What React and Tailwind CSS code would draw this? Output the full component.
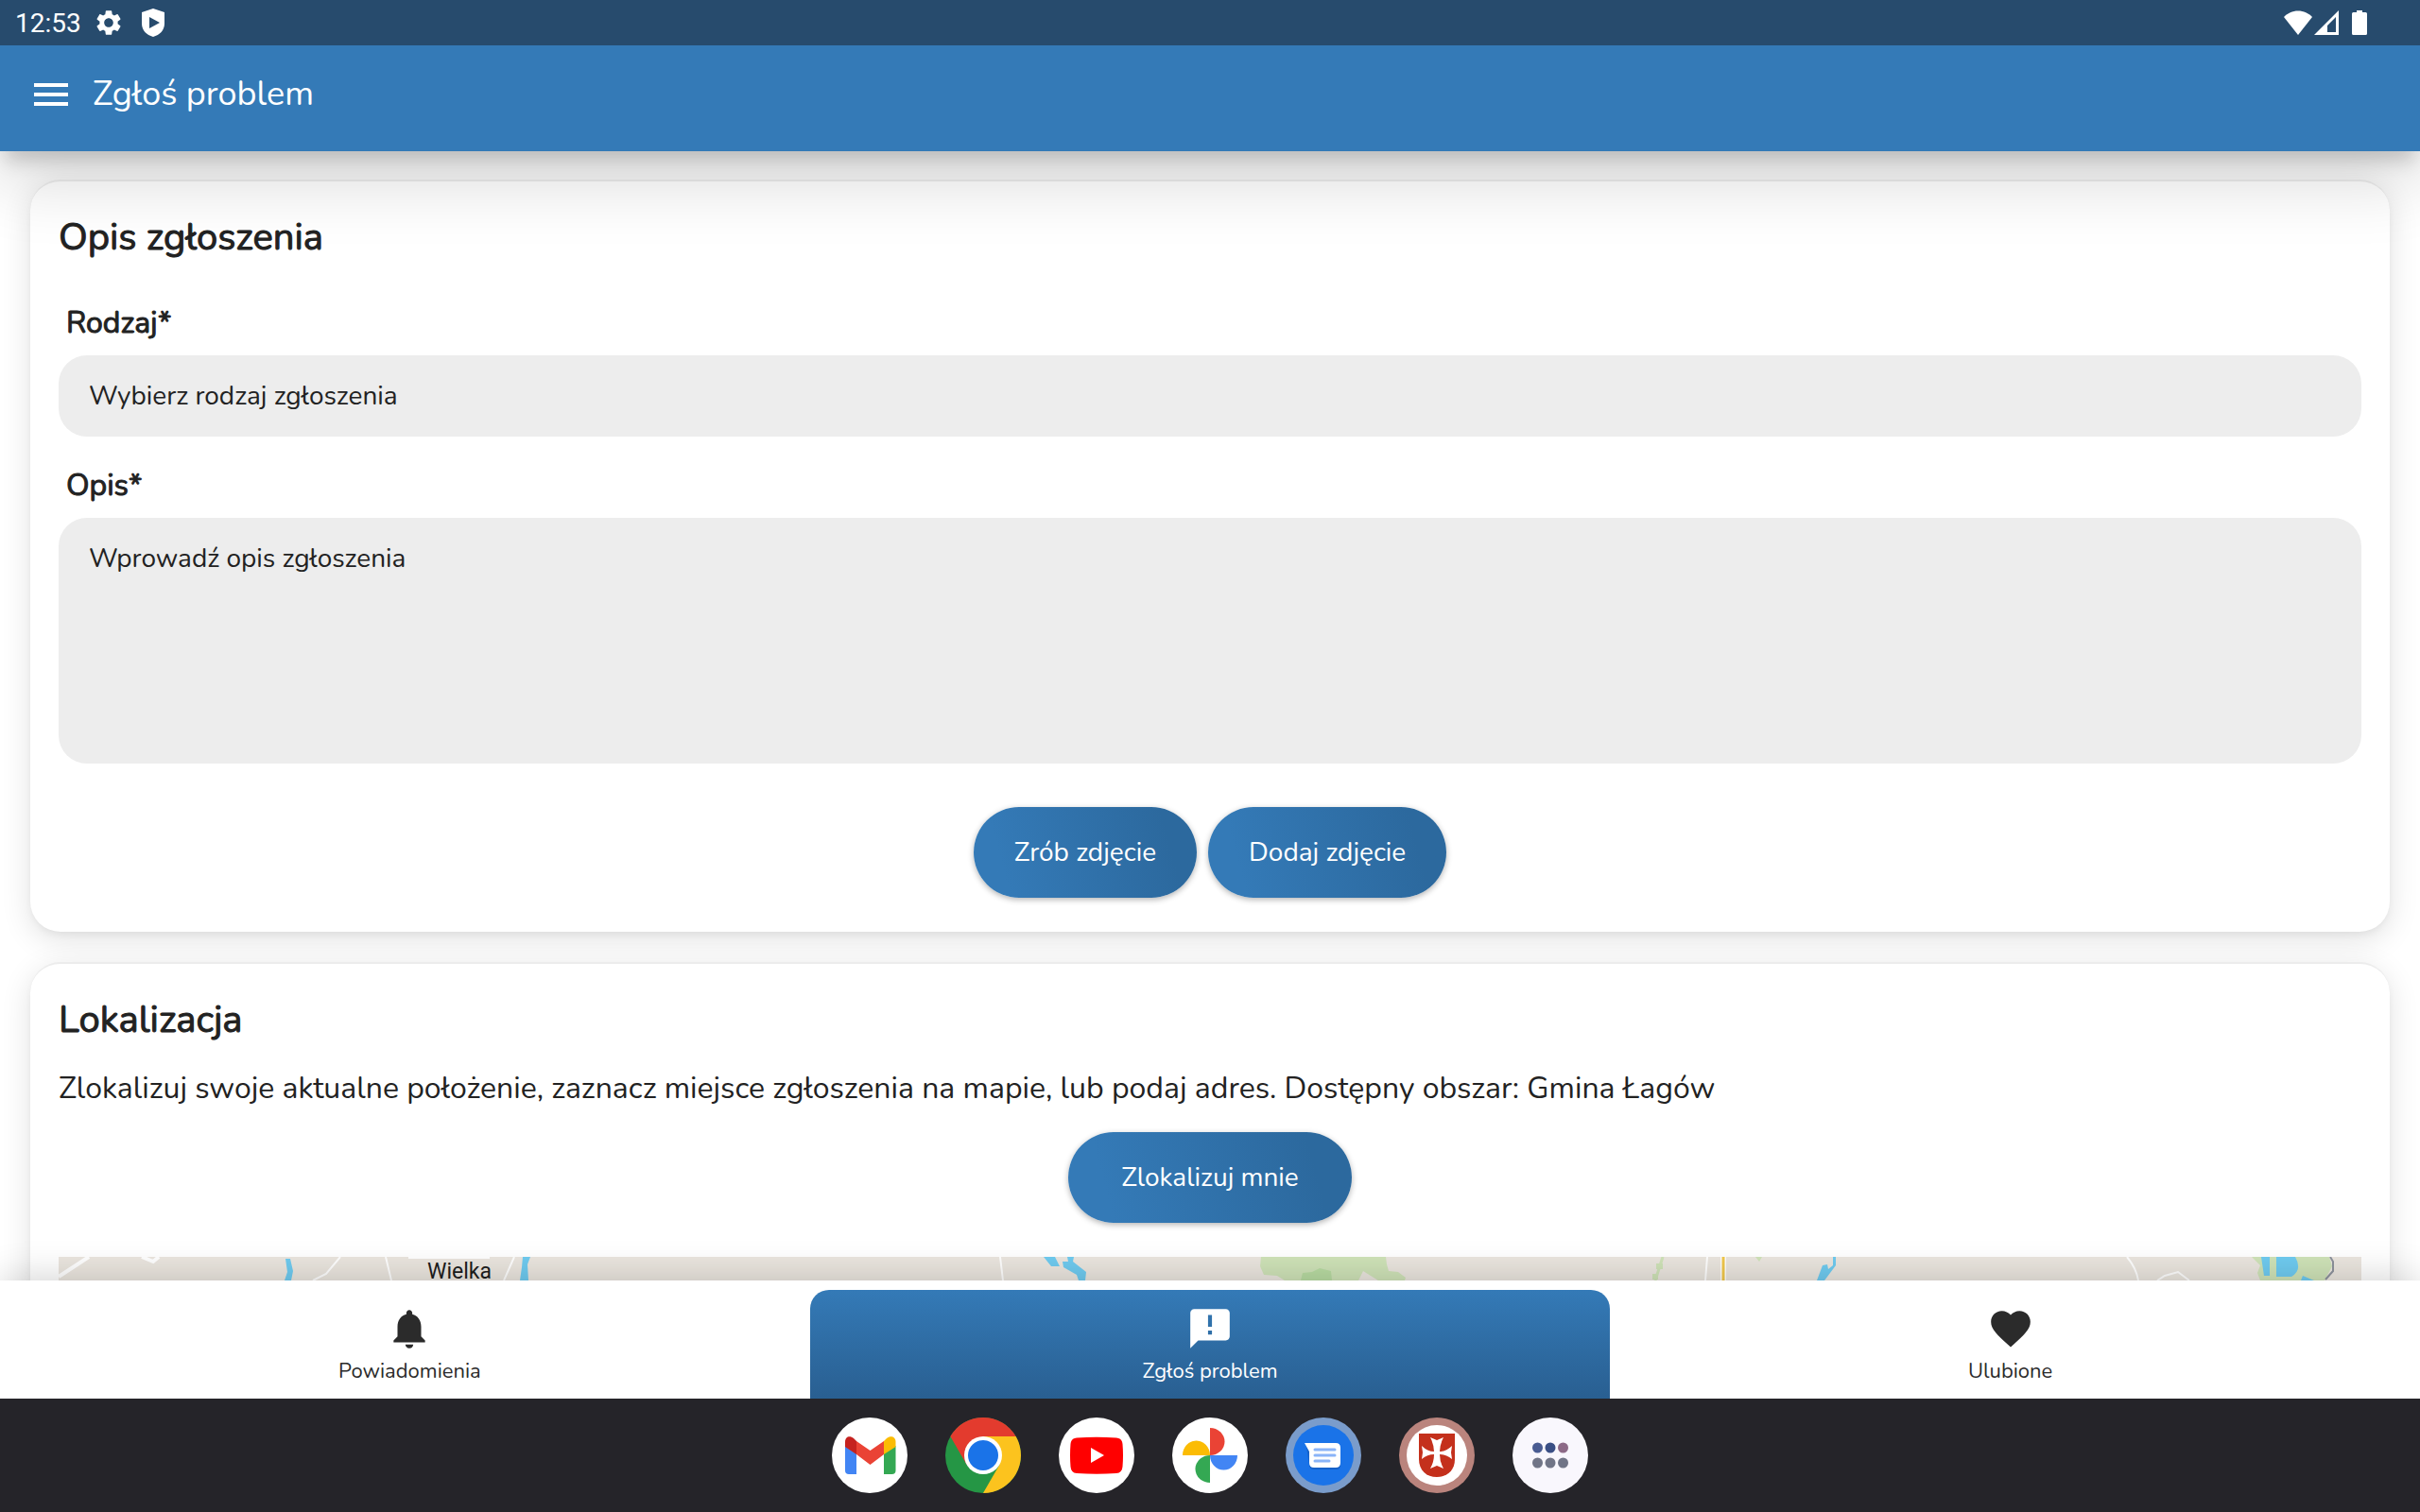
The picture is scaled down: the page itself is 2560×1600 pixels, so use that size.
import React, { useState } from "react";
import { MdAnnouncement, MdFavorite, MdMenu, MdNotifications, MdSettings } from "react-icons/md";

const TABS = [
  { id: "notifications", label: "Powiadomienia", icon: MdNotifications },
  { id: "report", label: "Zgłoś problem", icon: MdAnnouncement },
  { id: "favourites", label: "Ulubione", icon: MdFavorite },
];

// --- System status bar ---
function StatusBar() {
  return (
    <div className="relative z-20 flex h-12 shrink-0 items-center justify-between bg-[#274b6d] pl-4 pr-14 text-white">
      <div className="flex items-center">
        <span className="mt-0.5 w-[83px] font-[Roboto,sans-serif] text-[28px] leading-8">12:53</span>
        <MdSettings size={32} aria-hidden="true" />
        <svg className="ml-[18px]" width="26" height="32" viewBox="0 0 26 32" aria-hidden="true">
          <path
            fill="currentColor"
            fillRule="evenodd"
            d="M13 1 25 5v12c0 7-5 12-12 14C6 29 1 24 1 17V5L13 1Zm-4 9v12l11-6-11-6Z"
          />
        </svg>
      </div>
      <div className="flex items-center">
        <svg width="30" height="26" viewBox="0 0 30 26" aria-hidden="true">
          <path fill="currentColor" d="M15 26 0 7C4 3 9 .5 15 .5S26 3 30 7L15 26Z" />
        </svg>
        <svg className="ml-0.5" width="26" height="26" viewBox="0 0 26 26" aria-hidden="true">
          <path fill="currentColor" fillRule="evenodd" d="M26 0v26H0L26 0Zm-3 7-9 9v7h9V7Z" />
        </svg>
        <svg className="ml-3.5" width="16" height="26" viewBox="0 0 16 26" aria-hidden="true">
          <path
            fill="currentColor"
            d="M5 0h6v2h3.500q1.500 0 1.500 1.500v21q0 1.500-1.500 1.500h-13Q0 26 0 24.500v-21Q0 2 1.500 2H5V0Z"
          />
        </svg>
      </div>
    </div>
  );
}

function AppHeader() {
  return (
    <header className="relative z-10 flex h-28 shrink-0 items-center bg-[#347ab7] pb-2 pl-[30px] text-white shadow-[0_16px_18px_-6px_rgba(0,0,0,0.16),0_28px_70px_6px_rgba(0,0,0,0.14)]">
      <button type="button" aria-label="Menu" className="flex w-12 justify-center">
        <MdMenu size={48} />
      </button>
      <h1 className="ml-5 text-[36px] leading-12">Zgłoś problem</h1>
    </header>
  );
}

function Card({ title, children }) {
  return (
    <section className="rounded-[32px] border-t-2 border-[#ececec] bg-white px-[30px] pb-9 shadow-[0_4px_8px_-2px_rgba(0,0,0,0.06),0_8px_32px_rgba(0,0,0,0.12)]">
      <h2 className="pt-8 text-[40px] leading-[54px] [-webkit-text-stroke:1px_currentColor]">{title}</h2>
      {children}
    </section>
  );
}

function PillButton({ wide, children }) {
  return (
    <button
      type="button"
      className={`h-24 rounded-full bg-linear-75 from-[#347ab7] from-15% to-[#2c699e] to-85% text-[28px] text-white shadow-[0_2px_6px_rgba(0,0,0,0.3)] ${
        wide ? "px-14" : "px-[43px]"
      }`}
    >
      {children}
    </button>
  );
}

// --- Map preview, cut off by the tab bar ---
function MapPreview() {
  return (
    <div className="relative mt-9 h-[600px] overflow-hidden bg-[#ebe6df]">
      <svg className="absolute inset-0 h-[25px] w-full" viewBox="0 0 2436 25" preserveAspectRatio="none" aria-hidden="true">
        <g fill="none" stroke="#fff">
          <path strokeWidth="4" d="M0 21 32 0M88 0l12 5 6-5M370 0h86" />
          <path strokeWidth="2" d="M298 0l-15 18-14 7M346 0l6 25M482 0l-11 25M996 0l3 25M1744 0l-2 25M2188 0q10 12 12 25M2220 25l8-5 14-4 12 9" />
          <path stroke="#cfe3b8" strokeWidth="3" d="M1697 0l-8 25" />
        </g>
        <g fill="#cfe3b8">
          <path d="M1272 0h132l1 8 2 7 10 1 8 6-1 3h-28l-16-10-5 10h-78l-8-5-14-1-4-9Z" />
          <path d="M1690 7h7v6h-7ZM1686 18h6v6h-6ZM1795 0h7l-3 5Z" />
          <path d="M2320 0h82l3 10-8 15h-68l-3-8 3-8Z" />
        </g>
        <path fill="#b8dba2" d="M1314 25l2-8 10-1 8-4 12 3 1 10Z" />
        <g fill="#6fcbf0">
          <path d="M240 2h5l3 13-2 10h-7l3-9ZM491 0h8l-3 8 1 17h-9l2-14ZM1042 0h12l5 10h-9ZM1067 0h7l-1 5 14 11-1 9h-7l-2-6-14-8-1-6h6Z" />
          <path d="M1877 0h3v9l-12 16h-8l6-16 5-1 1 5 5-4ZM2330 0h9v20h-6ZM2346 0h20q8 14-4 21h-16ZM2374 20l12 5h-14Z" />
        </g>
        <path fill="none" stroke="#fff" strokeWidth="6" d="M1761 0v25" />
        <path fill="none" stroke="#f2c94c" strokeWidth="3" d="M1761 0v25" />
        <path fill="none" stroke="#8d929c" strokeWidth="2" d="M2403 0l3 5v10l-8 9" />
      </svg>
      <span className="absolute left-[390px] top-0.5 font-[Roboto,sans-serif] text-[23px] leading-7 text-[#1d1d1d]">Wielka</span>
    </div>
  );
}

function TabBar({ active, onChange }) {
  return (
    <nav className="relative z-10 flex h-[125px] shrink-0 bg-white px-2.5 pt-2.5 shadow-[0_0_40px_rgba(0,0,0,0.2)]">
      {TABS.map(({ id, label, icon: Icon }) => (
        <button
          key={id}
          type="button"
          onClick={() => onChange(id)}
          className={`flex flex-1 flex-col items-center rounded-t-[20px] pt-4 text-[22px] leading-8 ${
            id === active ? "bg-linear-to-b from-[#347ab7] to-[#295f91] text-white" : "text-[#2b2b2b]"
          }`}
        >
          <Icon size={50} aria-hidden="true" />
          <span className="mt-1">{label}</span>
        </button>
      ))}
    </nav>
  );
}

// --- Launcher icons, each drawn on an 80px disc ---
function GmailIcon() {
  return (
    <svg width="80" height="80" viewBox="0 0 80 80">
      <circle cx="40" cy="40" r="40" fill="#fff" />
      <path fill="#4285f4" d="M14 30l12 8v22h-8q-4 0-4-4Z" />
      <path fill="#34a853" d="M55 38l12.500-8v26q0 4-4 4H55Z" />
      <path fill="#ea4335" d="M26 25l14.500 10L55 25v14L40.500 50 26 39Z" />
      <path fill="#c5221f" d="M14 31v-5c0-6 5-7 9-4l3 3v14Z" />
      <path fill="#fbbc04" d="M67.500 31v-5c0-6-5.500-7-9.500-4l-3 3v14Z" />
    </svg>
  );
}

function ChromeIcon() {
  return (
    <svg width="80" height="80" viewBox="0 0 80 80">
      <circle cx="40" cy="40" r="40" fill="#259645" />
      <path fill="#fcc31e" d="M40 80A40 40 0 0 0 74.640 20H40L57.320 50Z" />
      <path fill="#e33b2e" d="M5.360 20A40 40 0 0 1 74.640 20H40L22.680 50Z" />
      <circle cx="40" cy="40" r="20" fill="#fff" />
      <circle cx="40" cy="40" r="16" fill="#1a73e8" />
    </svg>
  );
}

function YouTubeIcon() {
  return (
    <svg width="80" height="80" viewBox="0 0 80 80">
      <circle cx="40" cy="40" r="40" fill="#fff" />
      <path fill="#f00" d="M19 21.500q21-1.500 42 0 6 .5 6.500 6.500 1 12 0 24-.5 6.500-6.500 7-21 1.500-42 0-6-.5-6.500-7-1-12 0-24 .5-6 6.500-6.500Z" />
      <path fill="#fff" d="M34 32v16l14-8Z" />
    </svg>
  );
}

function PhotosIcon() {
  return (
    <svg width="80" height="80" viewBox="0 0 80 80">
      <circle cx="40" cy="40" r="40" fill="#fff" />
      <path fill="#ea4335" d="M40 11a15.500 14.500 0 0 1 0 29Z" />
      <path fill="#4285f4" d="M40 40h29a14.500 15.500 0 0 1-29 0Z" />
      <path fill="#34a853" d="M40 40v29a15.500 14.500 0 0 1 0-29Z" />
      <path fill="#fbbc04" d="M11 40a14.500 15.500 0 0 1 29 0Z" />
    </svg>
  );
}

function MessagesIcon() {
  return (
    <svg width="80" height="80" viewBox="0 0 80 80">
      <circle cx="40" cy="40" r="40" fill="#7a9ccb" />
      <circle cx="40" cy="40" r="32" fill="#1a73e8" />
      <path fill="#1762c9" d="M22 31l3 19q0 5 5 5h24q4 0 4-5V33Z" />
      <path fill="#fff" d="M20 27h33q5 0 5 5v16q0 5-5 5H30q-5 0-5-5V36Z" />
      <path stroke="#8ab4f8" strokeWidth="3" strokeLinecap="round" d="M31 34h21M31 40h21M31 46h15" />
    </svg>
  );
}

function CrestIcon() {
  return (
    <svg width="80" height="80" viewBox="0 0 80 80">
      <circle cx="40" cy="40" r="40" fill="#ba847d" />
      <circle cx="40" cy="40" r="32" fill="#fff" />
      <path fill="#c4301c" d="M21 17h38v27c0 12-8 19-19 19s-19-7-19-19Z" />
      <path
        fill="#fff"
        d="M33 21l7 3 7-3q-4 8-4 15 7 0 13-6l-1 7 1 7q-6-5-13-5 0 8 4 15l-7-3-7 3q4-7 4-15-7 0-13 5l1-7-1-7q6 6 13 6 0-7-4-15Z"
      />
    </svg>
  );
}

function AllAppsIcon() {
  return (
    <svg width="80" height="80" viewBox="0 0 80 80">
      <circle cx="40" cy="40" r="40" fill="#f9f7fd" />
      <circle cx="26.500" cy="32" r="5.500" fill="#4a5c92" />
      <circle cx="40" cy="32" r="5.500" fill="#3a4f85" />
      <circle cx="53.500" cy="32" r="5.500" fill="#8d6a87" />
      <g fill="#717587">
        <circle cx="26.500" cy="48" r="5.500" />
        <circle cx="40" cy="48" r="5.500" />
        <circle cx="53.500" cy="48" r="5.500" />
      </g>
    </svg>
  );
}

const DOCK = [
  { name: "Gmail", icon: GmailIcon },
  { name: "Chrome", icon: ChromeIcon },
  { name: "YouTube", icon: YouTubeIcon },
  { name: "Photos", icon: PhotosIcon },
  { name: "Messages", icon: MessagesIcon },
  { name: "Gmina", icon: CrestIcon },
  { name: "All apps", icon: AllAppsIcon },
];

function Taskbar() {
  return (
    <div className="relative z-20 flex h-[120px] shrink-0 items-center justify-center gap-10 bg-[#252429]">
      {DOCK.map(({ name, icon: Icon }) => (
        <button key={name} type="button" aria-label={name}>
          <Icon />
        </button>
      ))}
    </div>
  );
}

export default function App() {
  const [tab, setTab] = useState("report");

  return (
    <div className="flex h-screen flex-col bg-white font-[Nunito,Lato,sans-serif] text-[#222]">
      <StatusBar />
      <AppHeader />
      <main className="flex min-h-0 flex-1 flex-col gap-8 overflow-hidden px-8 pt-[30px]">
        <Card title="Opis zgłoszenia">
          <form>
            <label htmlFor="kind" className="mt-[42px] block pl-2 text-[32px] leading-11 [-webkit-text-stroke:1px_currentColor]">
              Rodzaj*
            </label>
            <select
              id="kind"
              className="mt-3 block h-[86px] w-full appearance-none rounded-[30px] bg-[#ededed] px-8 text-[28px]"
            >
              <option>Wybierz rodzaj zgłoszenia</option>
            </select>
            <label htmlFor="details" className="mt-[30px] block pl-2 text-[32px] leading-11 [-webkit-text-stroke:1px_currentColor]">
              Opis*
            </label>
            <textarea
              id="details"
              placeholder="Wprowadź opis zgłoszenia"
              className="mt-3 block h-[260px] w-full resize-none rounded-[30px] bg-[#ededed] px-8 py-6 text-[28px] leading-[38px] placeholder:text-[#222]"
            />
            <div className="mt-[46px] flex justify-center gap-3">
              <PillButton>Zrób zdjęcie</PillButton>
              <PillButton>Dodaj zdjęcie</PillButton>
            </div>
          </form>
        </Card>
        <Card title="Lokalizacja">
          <p className="mt-6 text-[32px] leading-11">
            Zlokalizuj swoje aktualne położenie, zaznacz miejsce zgłoszenia na mapie, lub podaj adres. Dostępny obszar: Gmina
            Łagów
          </p>
          <div className="mt-6 flex justify-center">
            <PillButton wide>Zlokalizuj mnie</PillButton>
          </div>
          <MapPreview />
        </Card>
      </main>
      <TabBar active={tab} onChange={setTab} />
      <Taskbar />
    </div>
  );
}
